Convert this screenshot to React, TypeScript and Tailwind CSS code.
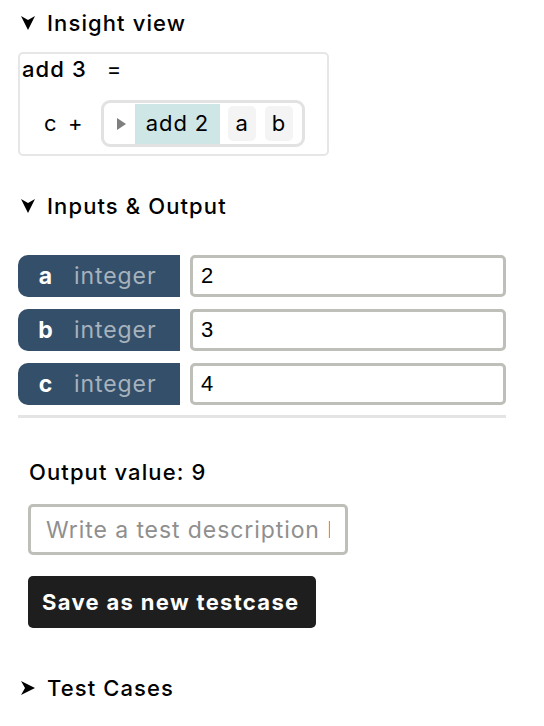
import React from "react";

const font = { fontFamily: "Inter, 'Noto Sans', sans-serif" };

const Arrow = ({ open }: { open: boolean }) => (
  <svg
    width="16"
    height="16"
    viewBox="0 0 16 16"
    className={open ? "" : "-rotate-90"}
  >
    <polygon points="1,1 8,5 15,1 8,15" fill="#000" />
  </svg>
);

const Section = ({ title, open }: { title: string; open: boolean }) => (
  <div className="flex items-center gap-[11px] pl-[20px] text-[22px] leading-[28px] font-medium tracking-[0.05em] text-black">
    <Arrow open={open} />
    <span>{title}</span>
  </div>
);

const inputs = [
  { name: "a", type: "integer", value: "2" },
  { name: "b", type: "integer", value: "3" },
  { name: "c", type: "integer", value: "4" },
];

export default function App() {
  return (
    <div className="w-[544px] h-[726px] bg-white overflow-hidden text-black" style={font}>
      <div className="pt-[9px]">
        <Section title="Insight view" open={true} />
      </div>

      <div className="ml-[18px] mt-[15px] w-[311px] h-[104px] border-2 border-[#e6e6e6] rounded-[5px] px-[2px]">
        <div className="flex items-center gap-[20px] text-[22px] leading-[28px] font-medium tracking-[0.05em] mt-[1px]">
          <span>add 3</span>
          <span className="font-normal">=</span>
        </div>
        <div className="flex items-center mt-[17px] pl-[22px] text-[22px] tracking-[0.04em]">
          <span className="w-[12px]">c</span>
          <span className="ml-[12px] w-[13px]">+</span>
          <div className="ml-[20px] w-[204px] h-[47px] flex items-center border-[3px] border-[#e2e2e2] rounded-[9px]">
            <svg width="10" height="16" viewBox="0 0 10 16" className="ml-[13px]">
              <polygon points="0,2 9,8 0,14" fill="#7f7f7f" />
            </svg>
            <span className="ml-[8px] bg-[#cfe6e6] w-[85px] h-[40px] flex items-center justify-center">add 2</span>
            <span className="ml-[8px] bg-[#f4f4f4] rounded-[5px] h-[35px] w-[28px] flex items-center justify-center">a</span>
            <span className="ml-[9px] bg-[#f4f4f4] rounded-[5px] h-[35px] w-[28px] flex items-center justify-center">b</span>
          </div>
        </div>
      </div>

      <div className="mt-[36px]">
        <Section title="Inputs & Output" open={true} />
      </div>

      <div className="mt-[35px] ml-[18px] w-[488px] flex flex-col gap-[12px]">
        {inputs.map((inp) => (
          <div key={inp.name} className="flex items-center h-[42px]">
            <div className="w-[162px] h-full bg-[#344f69] rounded-l-[10px] flex items-center text-[23px] tracking-[0.04em]">
              <span className="w-[56px] text-center font-bold text-white">{inp.name}</span>
              <span className="text-[#a7b2bd]">{inp.type}</span>
            </div>
            <input
              className="ml-[10px] flex-1 h-full border-[3px] border-[#bebfb8] rounded-[5px] px-[8px] text-[22px] text-black outline-none"
              style={{ fontFamily: "'Liberation Sans', Arial, sans-serif" }}
              defaultValue={inp.value}
            />
          </div>
        ))}
      </div>

      <div className="ml-[18px] mt-[10px] w-[488px] h-[3px] bg-[#e4e4e4]" />

      <div className="ml-[29px] mt-[40px] text-[22px] leading-[28px] font-medium tracking-[0.05em]">
        Output value: 9
      </div>

      <input
        className="ml-[28px] mt-[18px] block w-[320px] h-[51px] border-[3px] border-[#bebfb8] rounded-[5px] px-[15px] text-[23px] tracking-[0.04em] outline-none placeholder:text-[#8f8f8f]"
        placeholder="Write a test description here"
        style={font}
      />

      <button className="ml-[28px] mt-[21px] block w-[288px] h-[52px] px-[14px] text-left bg-[#1e1e1e] rounded-[5px] text-white text-[22px] font-bold tracking-[0.06em]">
        Save as new testcase
      </button>

      <div className="mt-[46px]">
        <Section title="Test Cases" open={false} />
      </div>
    </div>
  );
}
